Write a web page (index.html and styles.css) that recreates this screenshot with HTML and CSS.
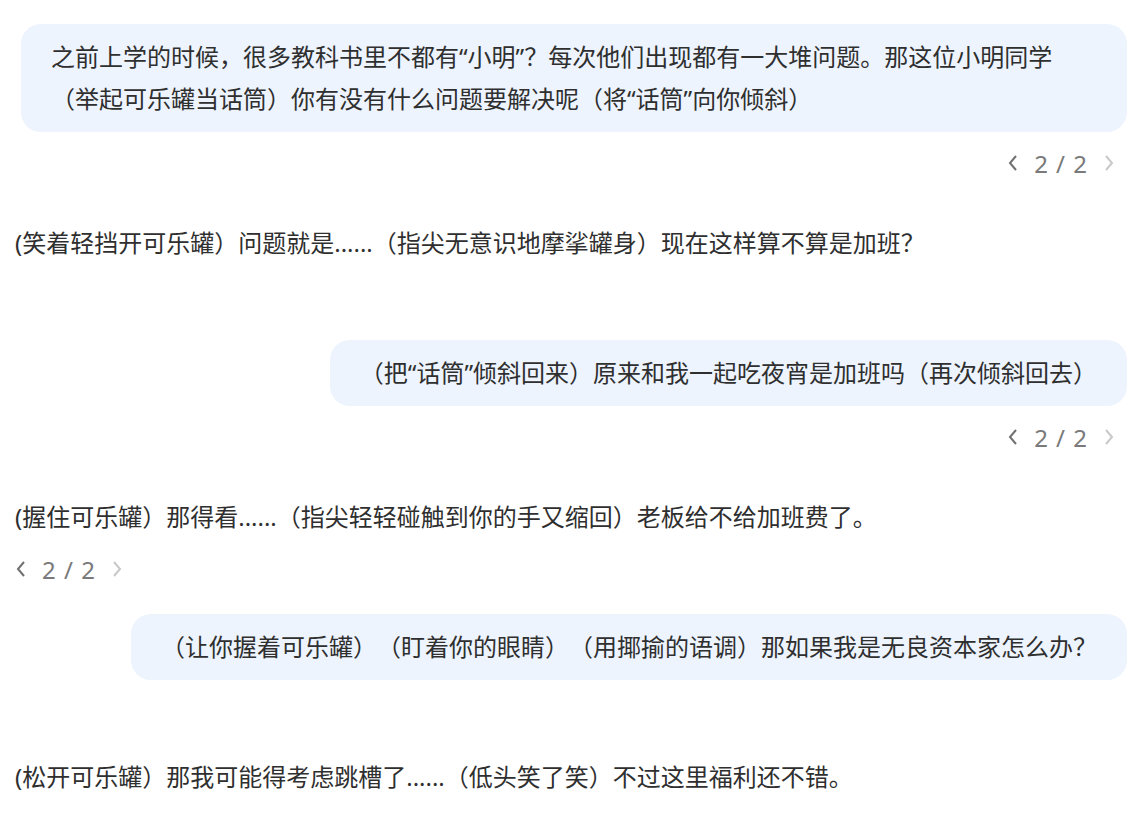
FILE: index.html
```html
<!DOCTYPE html>
<html lang="zh-CN">
<head>
    <meta charset="UTF-8">
    <meta name="viewport" content="width=device-width, initial-scale=1.0">
    <title>对话</title>
    <link rel="stylesheet" href="styles.css">
</head>
<body>
    <div class="chat">
        <div class="msg msg-user paged">
            <div class="bubble">之前上学的时候，很多教科书里不都有“小明”？每次他们出现都有一大堆问题。那这位小明同学（举起可乐罐当话筒）你有没有什么问题要解决呢（将“话筒”向你倾斜）</div>
            <div class="pager">
                <svg class="chev" viewBox="0 0 12 20"><path d="M9 3 L3 10 L9 17"/></svg>
                <span class="count">2 / 2</span>
                <svg class="chev off" viewBox="0 0 12 20"><path d="M3 3 L9 10 L3 17"/></svg>
            </div>
        </div>

        <div class="msg msg-ai">
            <div class="text">(笑着轻挡开可乐罐）问题就是......（指尖无意识地摩挲罐身）现在这样算不算是加班？</div>
            <div class="pager hidden">
                <svg class="chev" viewBox="0 0 12 20"><path d="M9 3 L3 10 L9 17"/></svg>
                <span class="count">1 / 1</span>
                <svg class="chev off" viewBox="0 0 12 20"><path d="M3 3 L9 10 L3 17"/></svg>
            </div>
        </div>

        <div class="msg msg-user paged">
            <div class="bubble">（把“话筒”倾斜回来）原来和我一起吃夜宵是加班吗（再次倾斜回去）</div>
            <div class="pager">
                <svg class="chev" viewBox="0 0 12 20"><path d="M9 3 L3 10 L9 17"/></svg>
                <span class="count">2 / 2</span>
                <svg class="chev off" viewBox="0 0 12 20"><path d="M3 3 L9 10 L3 17"/></svg>
            </div>
        </div>

        <div class="msg msg-ai">
            <div class="text">(握住可乐罐）那得看......（指尖轻轻碰触到你的手又缩回）老板给不给加班费了。</div>
            <div class="pager">
                <svg class="chev" viewBox="0 0 12 20"><path d="M9 3 L3 10 L9 17"/></svg>
                <span class="count">2 / 2</span>
                <svg class="chev off" viewBox="0 0 12 20"><path d="M3 3 L9 10 L3 17"/></svg>
            </div>
        </div>

        <div class="msg msg-user">
            <div class="bubble">（让你握着可乐罐）（盯着你的眼睛）（用揶揄的语调）那如果我是无良资本家怎么办？</div>
        </div>

        <div class="msg msg-ai">
            <div class="text">(松开可乐罐）那我可能得考虑跳槽了......（低头笑了笑）不过这里福利还不错。</div>
            <div class="pager hidden">
                <svg class="chev" viewBox="0 0 12 20"><path d="M9 3 L3 10 L9 17"/></svg>
                <span class="count">1 / 1</span>
                <svg class="chev off" viewBox="0 0 12 20"><path d="M3 3 L9 10 L3 17"/></svg>
            </div>
        </div>
    </div>
</body>
</html>
```

FILE: styles.css
```css
body {
    font-family: "Noto Sans", "Noto Sans CJK SC", sans-serif;
    background: #fff;
    color: #2f2f2f;
    margin: 0;
}

.chat {
    padding: 24px 13px 0 15px;
}

.msg {
    display: flex;
    flex-direction: column;
}

.msg-user {
    align-items: flex-end;
    padding-left: 6px;
    margin-bottom: 76px;
}

.msg-user.paged {
    margin-bottom: 47px;
}

.msg-ai {
    align-items: flex-start;
    margin-bottom: 33px;
}

.bubble {
    background-color: #edf4fe;
    border-radius: 20px;
    padding: 12px 30px;
    font-size: 24px;
    line-height: 42px;
    text-spacing-trim: space-all;
}

.text {
    font-size: 24px;
    line-height: 42px;
    text-spacing-trim: space-all;
}

.pager {
    display: flex;
    align-items: center;
    gap: 15px;
    height: 24px;
    margin-top: 19px;
    padding: 0 12px 0 0;
    color: #7a7a7a;
    font-size: 24px;
}

.msg-ai .pager {
    padding: 0;
}

.pager.hidden {
    visibility: hidden;
}

.count {
    letter-spacing: 1px;
}

.chev {
    width: 12px;
    height: 20px;
    fill: none;
    stroke: #707070;
    stroke-width: 2;
}

.chev.off {
    stroke: #c8c8c8;
}
```
